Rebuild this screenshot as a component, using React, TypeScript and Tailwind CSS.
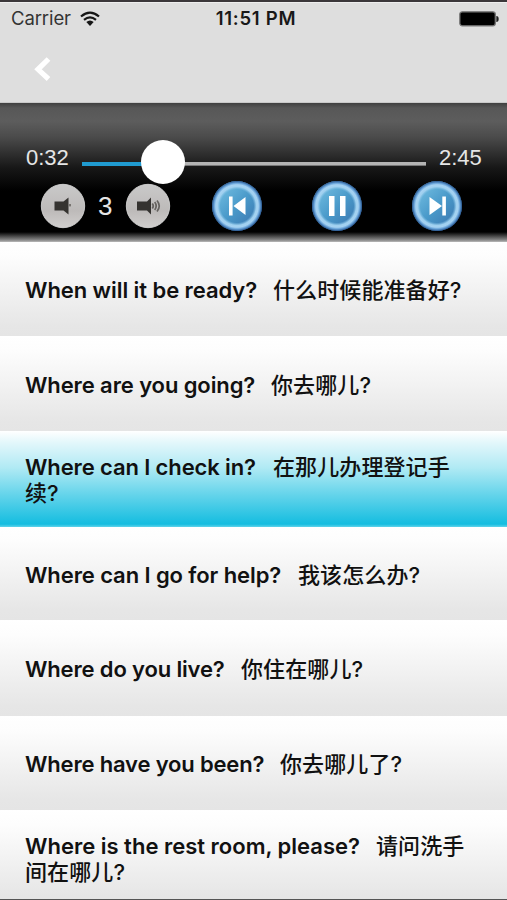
import React from "react";

type Phrase = {
  en: string;
  enClass: string;
  zh: string;
  rest?: string;
  rowClass: string;
  active?: boolean;
};

const phrases: Phrase[] = [
  { en: "When will it be ready?", enClass: "w-[248px] tracking-[-0.06px]", zh: "什么时候能准备好?", rowClass: "h-[94px] pt-px" },
  { en: "Where are you going?", enClass: "w-[246px] tracking-[-0.1px]", zh: "你去哪儿?", rowClass: "h-[95px] pt-[3px]" },
  { en: "Where can I check in?", enClass: "w-[248px] tracking-[-0.12px]", zh: "在那儿办理登记手", rest: "续?", rowClass: "h-[96px] pt-px", active: true },
  { en: "Where can I go for help?", enClass: "w-[273px] tracking-[-0.09px]", zh: "我该怎么办?", rowClass: "h-[93px] pt-[3px]" },
  { en: "Where do you live?", enClass: "w-[216px] tracking-[-0.15px]", zh: "你住在哪儿?", rowClass: "h-[96px] pt-px" },
  { en: "Where have you been?", enClass: "w-[255px] tracking-[-0.17px]", zh: "你去哪儿了?", rowClass: "h-[94px] pt-px" },
  { en: "Where is the rest room, please?", enClass: "w-[351px]", zh: "请问洗手", rest: "间在哪儿?", rowClass: "h-[96px] pt-px" },
];

function PhraseRow({ phrase }: { phrase: Phrase }) {
  const background = phrase.active
    ? "bg-[linear-gradient(to_bottom,#ffffff_0%,#e3f7fb_12%,#b1eaf4_38%,#68d5eb_65%,#14bde0_97%,#5fd3ea_100%)]"
    : "bg-[linear-gradient(to_bottom,#ffffff_0%,#fdfdfd_15%,#e6e6e6_90%,#e5e5e5_100%)]";
  return (
    <li className={`${phrase.rowClass} ${background} flex shrink-0 flex-col justify-center pl-[25px] text-[22px] font-medium leading-[26px] text-[#111]`}>
      <div className="flex h-[26px] whitespace-nowrap">
        <span className={`${phrase.enClass} shrink-0 font-semibold`}>{phrase.en}</span>
        <span className="tracking-[0.1px]">{phrase.zh}</span>
      </div>
      {phrase.rest && <div className="h-[26px] tracking-[0.1px]">{phrase.rest}</div>}
    </li>
  );
}

function VolumeButton({ loud }: { loud?: boolean }) {
  return (
    <svg className="size-[46px]" viewBox="0 0 46 46">
      <defs>
        <linearGradient id={loud ? "metalLoud" : "metalQuiet"} x1="0" y1="0" x2="0" y2="1">
          <stop offset="0" stopColor="#c9c9c9" />
          <stop offset="0.6" stopColor="#bdbab9" />
          <stop offset="1" stopColor="#d0cecd" />
        </linearGradient>
      </defs>
      <circle cx="23" cy="23" r="21.7" fill={loud ? "url(#metalLoud)" : "url(#metalQuiet)"} stroke="#dedede" strokeWidth="0.8" />
      {loud ? (
        <g>
          <path d="M12 18.5h8l2 0 4-4v17l-4-4h-10z" fill="#353330" />
          <path d="M27.3 20.5q2 2.5 0 5M29.7 19q3 4 0 8M32 17.5q4.500 5.500 0 11" fill="none" stroke="#65625f" strokeWidth="1.7" />
        </g>
      ) : (
        <g>
          <path d="M14.5 18.5h9l5-4v17l-5-4h-9z" fill="#353330" />
          <path d="M28.5 22.2h2.5" stroke="#777470" strokeWidth="2.4" />
        </g>
      )}
    </svg>
  );
}

function TransportButton({ kind }: { kind: "previous" | "pause" | "next" }) {
  const body = `body-${kind}`;
  const rim = `rim-${kind}`;
  return (
    <svg className="size-[52px]" viewBox="0 0 52 52">
      <defs>
        <linearGradient id={body} x1="0" y1="0" x2="1" y2="1">
          <stop offset="0.15" stopColor="#70bce0" />
          <stop offset="0.5" stopColor="#4a9aca" />
          <stop offset="0.85" stopColor="#3c79b2" />
        </linearGradient>
        <radialGradient id={rim}>
          <stop offset="0.66" stopColor="#82bfe4" stopOpacity="0" />
          <stop offset="0.77" stopColor="#9fd0ef" />
          <stop offset="0.85" stopColor="#a6d2f2" />
          <stop offset="0.92" stopColor="#639fd6" />
          <stop offset="1" stopColor="#264f87" />
        </radialGradient>
      </defs>
      <circle cx="26" cy="26" r="25" fill={`url(#${body})`} />
      <circle cx="26" cy="26" r="25" fill={`url(#${rim})`} />
      {kind === "previous" && <path d="M18 16.5h3.6v19H18zM34.5 17v18L22.5 26z" fill="#fff" />}
      {kind === "pause" && <path d="M18 16h5.5v20H18zM29 16h5.5v20H29z" fill="#fff" />}
      {kind === "next" && <path d="M18.5 17v18L31 26zM31.3 16.5h3.6v19h-3.6z" fill="#fff" />}
    </svg>
  );
}

function StatusBar() {
  return (
    <div className="flex h-[31px] items-center leading-[31px]">
      <div className="flex flex-1 items-center pl-[11px] text-[#333]">
        <span className="w-[69px] whitespace-nowrap text-[18.5px] tracking-[-0.1px]">Carrier</span>
        <svg className="h-[16px] w-[20px]" viewBox="0 0 20 16">
          <path d="M1 5.5Q10-2.3 19 5.5M4 8.9Q10 3.800 16 8.9" fill="none" stroke="#161616" strokeWidth="2.2" />
          <path d="M6.3 11.1Q10 8 13.700 11.1L10 15z" fill="#161616" />
        </svg>
      </div>
      <span className="whitespace-nowrap pl-[2px] text-[18.5px] font-semibold tracking-[0.75px] text-[#181818]">11:51 PM</span>
      <div className="flex flex-1 justify-end pr-[8px]">
        <svg className="h-[16px] w-[40px]" viewBox="0 0 40 16">
          <rect x="0.8" y="0.8" width="35.5" height="14" rx="2.5" fill="#000" stroke="#777" strokeWidth="1.3" />
          <path d="M37.3 5q2.4 0 2.4 3t-2.4 3z" fill="#222" />
        </svg>
      </div>
    </div>
  );
}

function Player() {
  return (
    <section className="h-[139px] shrink-0 bg-[linear-gradient(to_bottom,#404040_0px,#575757_5px,#5d5d5d_18px,#4b4b4b_34px,#303030_50px,#171717_65px,#0a0a0a_78px,#000_88px,#000_129px,#333_132px,#888_137px,#bbb_139px)] font-['Liberation_Sans',Arial,sans-serif] text-[#e6e6e6]">
      <div className="flex h-[77px] items-end pl-[26px] text-[22px] leading-[44px]">
        <span className="w-[56px]">0:32</span>
        <div className="relative h-[32px] w-[344px]">
          <div className="mt-[14px] flex h-[4px]">
            <div className="w-[81px] bg-[#209bd0]" />
            <div className="flex-1 border-b border-[#777] bg-[#b4b4b4]" />
          </div>
          <div className="absolute left-[59px] top-[-8px] z-10 size-[44px] rounded-full bg-white" />
        </div>
        <span className="ml-[13px]">2:45</span>
      </div>
      <div className="flex h-[52px] items-center pl-[39.5px]">
        <VolumeButton />
        <span className="w-[39.5px] text-center text-[26px] leading-[46px]">3</span>
        <VolumeButton loud />
        <div className="ml-[39.5px] flex w-[252.5px] justify-between">
          <TransportButton kind="previous" />
          <TransportButton kind="pause" />
          <TransportButton kind="next" />
        </div>
      </div>
    </section>
  );
}

export default function App() {
  return (
    <main className="flex h-[900px] w-[507px] flex-col overflow-hidden border-b border-t-2 border-b-[#555] border-t-[#3b373a] bg-white font-['Inter','Noto_Sans_CJK_SC',sans-serif]">
      <header className="h-[101px] shrink-0 border-b border-t border-[#c9c9c9] border-t-[#eee] bg-[#dedede]">
        <StatusBar />
        <button className="ml-[34px] mt-[23px] block" aria-label="Back">
          <svg className="h-[24px] w-[18px]" viewBox="0 0 18 24">
            <path d="M14.5 2L4 12.3 14.5 22" fill="none" stroke="#fff" strokeWidth="5.2" />
          </svg>
        </button>
      </header>
      <Player />
      <ul className="flex min-h-0 flex-1 flex-col overflow-hidden">
        {phrases.map((phrase) => (
          <PhraseRow key={phrase.en} phrase={phrase} />
        ))}
      </ul>
    </main>
  );
}
